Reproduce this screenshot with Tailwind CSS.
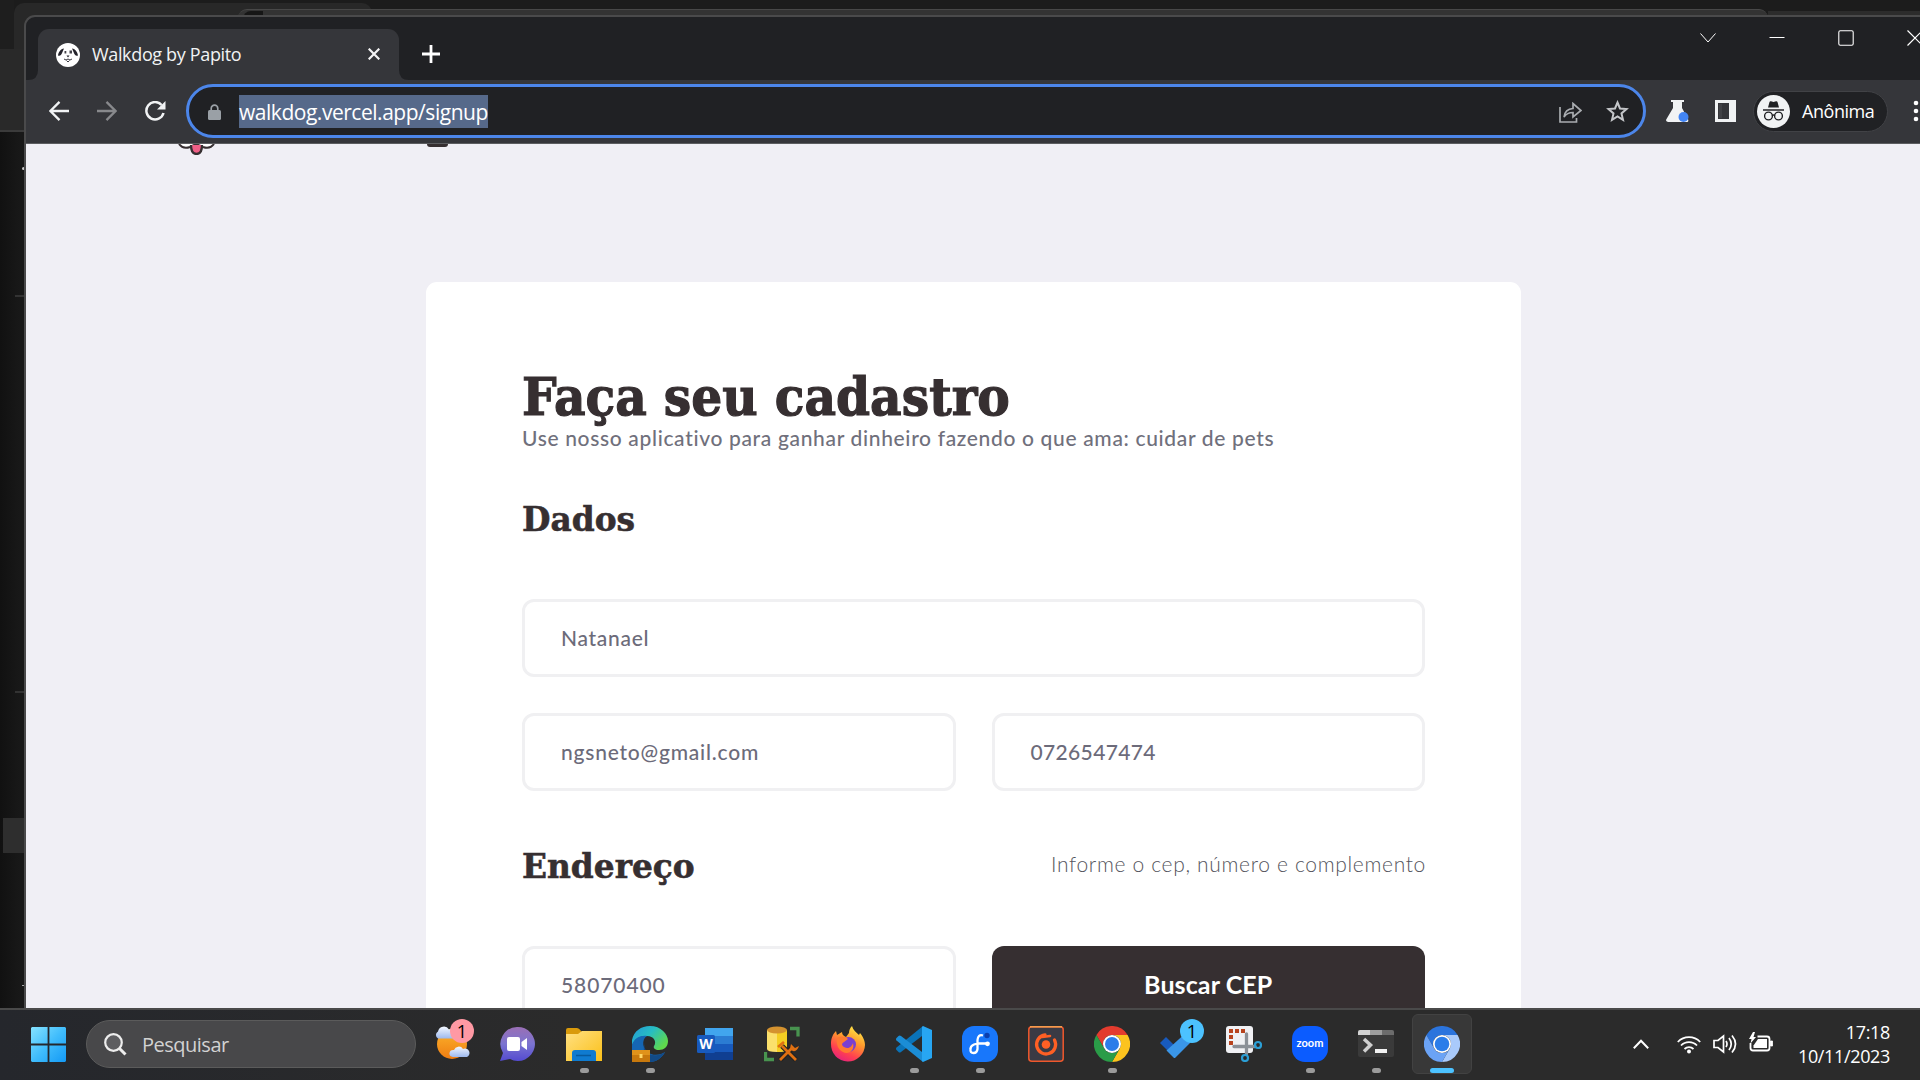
<!DOCTYPE html>
<html lang="pt-BR">
<head>
<meta charset="utf-8">
<title>Walkdog by Papito</title>
<script src="https://cdn.jsdelivr.net/npm/@tailwindcss/browser@4"></script>
</head>
<body class="relative flex h-[1080px] w-[1920px] flex-col overflow-hidden bg-[#181818] font-['Open_Sans',sans-serif]">

<!-- Window behind the browser -->
<div class="absolute inset-0 bg-gradient-to-r from-[#111] from-0% via-[#181818] via-[1%] to-[#181818]">
  <div class="h-[130px] bg-[#1c1c1c]">
    <div class="flex h-[49px]">
      <div class="w-[14px] bg-[#1e1e1e]"></div>
      <div class="mt-[3px] h-[46px] w-[358px] rounded-t-[10px] bg-[#282828]"></div>
    </div>
    <div class="h-[81px] bg-[#292929]"></div>
  </div>
  <div class="h-[2px] bg-[#3b3b3b]"></div>
  <div class="absolute top-[9px] left-[238px] h-5 w-[1530px] rounded-t-[9px] border-t border-[#484848] bg-[#333]"></div>
  <div class="absolute top-[11px] left-[243px] h-2 w-[20px] rounded-tl-lg bg-[#161616]"></div>
  <div class="absolute top-[11px] left-[1768px] h-2 w-[152px] bg-[#2c2c2c]"></div>
  <div class="absolute top-[167px] left-[22px] h-[3px] w-[3px] rounded-full bg-[#ccc]"></div>
  <div class="absolute top-[295px] left-[15px] h-[2px] w-[10px] bg-[#333]"></div>
  <div class="absolute top-[691px] left-[15px] h-[2px] w-[10px] bg-[#333]"></div>
  <div class="absolute top-[818px] left-[3px] h-[35px] w-[22px] bg-[#2e2e2e]"></div>
  <div class="absolute top-[985px] left-[22px] h-px w-[3px] bg-[#aaa]"></div>
</div>

<!-- Browser window -->
<main class="relative mt-[15px] ml-[24px] flex h-[993px] w-[1896px] flex-col overflow-hidden rounded-tl-[11px] border-t-2 border-l-2 border-[#4a4a4b] bg-[#202124]">
  <header class="flex h-[63px] shrink-0">
    <div class="relative mt-3 ml-3 flex h-[51px] w-[361px] items-center rounded-t-[11px] bg-[#35363a] pl-[18px]">
      <svg class="size-6" viewBox="0 0 24 24"><circle cx="12" cy="12" r="12" fill="#fff"/><path d="M8 5.500C4.500 6 2.500 9 2 12.500c2 1 3.500-.5 4.500-3.500zM16 5.500c3.500.5 5.500 3.500 6 7-2 1-3.500-.5-4.500-3.500z" fill="#25242c"/><path d="M8.500 8h1.800v2.500H8.500zM13.500 7.500H16v3h-2.500z" fill="#44434a"/><path d="M10.500 12.500h3L12 14.500z" fill="#25242c"/><path d="M8 16q2 2 4 0 2 2 4 0M10.500 17.500l1.500 1.500 1.500-1.500" fill="none" stroke="#25242c" stroke-width=".9"/></svg>
      <span class="mb-0.5 ml-3 w-[270px] text-[18px] leading-6 tracking-[-0.35px] whitespace-nowrap text-[#f1f3f4]">Walkdog by Papito</span>
      <svg class="absolute left-[330px] top-[19px] size-3" viewBox="0 0 12 12" stroke="#f4f4f5" stroke-width="2.2"><path d="M.7.7l10.6 10.6M11.3.7L.7 11.3"/></svg>
      <svg class="absolute bottom-0 -left-[10px] size-[10px]" viewBox="0 0 10 10"><path d="M10 0v10H0Q10 10 10 0" fill="#35363a"/></svg>
      <svg class="absolute bottom-0 -right-[10px] size-[10px]" viewBox="0 0 10 10"><path d="M0 0v10h10Q0 10 0 0" fill="#35363a"/></svg>
    </div>
    <svg class="mt-[28px] ml-[23px] size-[18px]" viewBox="0 0 18 18" stroke="#fff" stroke-width="2.8"><path d="M9 0v18M0 9h18"/></svg>
    <div class="ml-auto flex h-[42px] items-center text-white">
      <svg class="mr-[53px] h-[10px] w-4" viewBox="0 0 16 10" fill="none" stroke="currentColor" stroke-width="1"><path d="M.5.5L8 9 15.500.5"/></svg>
      <svg class="mr-[53px] h-[16px] w-4" viewBox="0 0 16 16" stroke="currentColor" stroke-width="1"><path d="M.5 7.500h15"/></svg>
      <svg class="mr-[53px] size-4" viewBox="0 0 16 16" fill="none" stroke="currentColor" stroke-width="1.1"><rect x=".8" y=".8" width="14.400" height="14.400" rx="1.500"/></svg>
      <svg class="-mr-[3px] size-4" viewBox="0 0 16 16" stroke="currentColor" stroke-width="1.2"><path d="M.5.5l15 15M15.500.5l-15 15"/></svg>
    </div>
  </header>

  <nav class="relative flex h-[64px] shrink-0 items-center border-b border-[#5c5d60] bg-[#35363a] pb-px pl-[23px]">
    <svg class="h-5 w-5" viewBox="0 0 20 20" fill="none" stroke="#f1f3f4" stroke-width="2.300"><path d="M20 10H1.500M10.500.9L1.400 10l9.100 9.100"/></svg>
    <svg class="ml-7 h-5 w-5" viewBox="0 0 20 20" fill="none" stroke="#88898c" stroke-width="2.300"><path d="M0 10h18.500M9.500.9l9.100 9.100-9.100 9.100"/></svg>
    <svg class="ml-7 h-5 w-[21px]" viewBox="0 0 21 20" fill="none" stroke="#f1f3f4" stroke-width="2.500"><path d="M16.600 4A8.700 8.700 0 1 0 18.500 12"/><path d="M20.500 0v8.500H12z" fill="#f1f3f4" stroke="none"/></svg>
    <div class="ml-5 flex h-[54px] w-[1460px] items-center rounded-full border-3 border-[#4c86ea] bg-[#202124] pl-[19px]">
      <svg class="mt-0.5 h-4 w-[13px]" viewBox="0 0 13 16"><rect y="6" width="13" height="10" rx="1.500" fill="#9aa0a6"/><path d="M3.200 7V4.500a3.300 3.300 0 0 1 6.600 0V7" fill="none" stroke="#9aa0a6" stroke-width="1.700"/></svg>
      <span class="ml-[18px] h-[33px] w-[249px] bg-[#56698a] text-[21px] leading-[34px] tracking-[-0.47px] whitespace-nowrap text-white">walkdog.vercel.app/signup</span>
      <svg class="mt-0.5 ml-auto h-[21px] w-[23px]" viewBox="0 0 23 21" fill="none" stroke="#a9acb0" stroke-width="1.700"><path d="M1 5v15h16.500v-4"/><path d="M5 15Q6 7 14 6.500V1.500l8 7-8 6.500v-4.500Q8 10.500 5 15z"/></svg>
      <svg class="mr-[14px] ml-6 h-[22px] w-[23px]" viewBox="0 0 23 22" fill="none" stroke="#c4c6c9" stroke-width="2"><path d="M11.500 2.500l2.500 6 6.500.6-5 4.300 1.500 6.400-5.500-3.400L6 19.800l1.500-6.400-5-4.300L9 8.500z"/></svg>
    </div>
    <svg class="ml-[20px] h-[22px] w-[24px]" viewBox="0 0 24 22"><path d="M5 0h13v2h-2v6l6 11q1 3-1 3H2q-3-1-1.500-3L7 8V2H5z" fill="#f1f3f4"/><circle cx="17.500" cy="17" r="5" fill="#4285f4"/></svg>
    <svg class="ml-[25px] h-[22px] w-[21px]" viewBox="0 0 21 22"><path d="M0 0h21v22H0z" fill="#f1f3f4"/><path d="M3 3h11v16H3z" fill="#35363a"/><path d="M4 4h3v14H4z" fill="#55565a" opacity=".4"/></svg>
    <div class="ml-[17px] flex h-[41px] w-[135px] items-center rounded-full border border-[#414246] bg-[#202124] pl-[3px]">
      <svg class="size-[33px]" viewBox="0 0 33 33"><circle cx="16.500" cy="16.500" r="16.500" fill="#f1f3f4"/><path d="M11 12.500l1.500-5.500q.4-1 1.500-.7l2.500.6 2.500-.6q1.100-.3 1.500.7l1.500 5.500z" fill="#202124"/><path d="M6 15h21" stroke="#202124" stroke-width="1.500"/><g fill="none" stroke="#202124" stroke-width="1.400"><circle cx="11.500" cy="21" r="3.900"/><circle cx="21.500" cy="21" r="3.900"/><path d="M15 20.500q1.500-1 3 0"/></g></svg>
      <span class="mb-px ml-3 text-[18px] leading-6 tracking-[-0.45px] text-white">Anônima</span>
    </div>
    <svg class="ml-[26px] h-5 w-1 shrink-0 overflow-visible" viewBox="0 0 4 20" fill="#fff"><circle cx="2" cy="2" r="2.300"/><circle cx="2" cy="10" r="2.300"/><circle cx="2" cy="18" r="2.300"/></svg>
  </nav>

  <section class="relative flex min-h-0 grow flex-col bg-[#f0eff5] font-['Lato',sans-serif]">
    <div class="flex h-[138px] shrink-0 items-start pl-[152px]">
      <svg class="h-[11px] w-[37px]" viewBox="0 0 37 11"><path d="M1 0q4 5.500 11 3l6-3 7 3q7 2.500 11-3" fill="#fff" stroke="#362f31" stroke-width="2"/><path d="M13 1q0 9 5.500 9T24 1" fill="#ef5f86" stroke="#362f31" stroke-width="2.300"/></svg>
      <div class="ml-[212px] h-[3px] w-[21px] rounded-b-md bg-[#362f31]"></div>
    </div>
    <div class="ml-[400px] w-[1095px] shrink-0 rounded-t-[11px] bg-white px-24 pt-[82px]">
      <h1 class="h-[60px] origin-left scale-x-[0.92] font-['DejaVu_Serif',serif] text-[53px] leading-[64px] font-bold whitespace-nowrap text-[#362f31] [-webkit-text-stroke:1.2px_#362f31]">Faça seu cadastro</h1>
      <p class="h-[61px] text-[21px] leading-[28px] font-medium tracking-[0.66px] whitespace-nowrap text-[#70707c]">Use nosso aplicativo para ganhar dinheiro fazendo o que ama: cuidar de pets</p>
      <h2 class="mt-[12px] h-[44px] origin-left scale-x-[0.965] font-['DejaVu_Serif',serif] text-[34px] leading-[44px] font-bold whitespace-nowrap text-[#362f31] [-webkit-text-stroke:0.6px_#362f31]">Dados</h2>
      <div class="mt-[58px] flex h-[78px] items-center rounded-xl border-3 border-[#f0f0f2] px-9 text-[21px] font-medium tracking-[0.7px] text-[#6c6b7a]">Natanael</div>
      <div class="mt-9 grid grid-cols-2 gap-9 text-[21px] font-medium text-[#6c6b7a]">
        <div class="flex h-[78px] items-center rounded-xl border-3 border-[#f0f0f2] px-9 tracking-[0.78px]">ngsneto@gmail.com</div>
        <div class="flex h-[78px] items-center rounded-xl border-3 border-[#f0f0f2] px-9 tracking-[0.35px]">0726547474</div>
      </div>
      <div class="mt-[52px] flex h-[46px] items-center justify-between">
        <h2 class="w-[200px] origin-left scale-x-[0.965] font-['DejaVu_Serif',serif] text-[34px] leading-[44px] font-bold whitespace-nowrap text-[#362f31] [-webkit-text-stroke:0.6px_#362f31]">Endereço</h2>
        <span class="-mr-px mb-1 text-[21px] font-light tracking-[0.67px] whitespace-nowrap text-[#55555d]">Informe o cep, número e complemento</span>
      </div>
      <div class="mt-[57px] grid grid-cols-2 gap-9">
        <div class="flex h-[78px] items-center rounded-xl border-3 border-[#f0f0f2] px-9 text-[21px] font-medium tracking-[0.9px] text-[#6c6b7a]">58070400</div>
        <button class="h-[78px] rounded-xl bg-[#362f31] text-[25px] font-bold tracking-[0.1px] text-white">Buscar CEP</button>
      </div>
    </div>
  </section>
</main>

<!-- Taskbar -->
<footer class="relative flex h-[72px] shrink-0 border-t-2 border-[#4a4a4a] bg-gradient-to-r from-[#25272c] to-[#2b2b2b] to-30%">
  <svg class="mt-[17px] ml-[31px] size-[35px] shrink-0" viewBox="0 0 35 35"><defs><linearGradient id="win" x2="1" y2="1"><stop stop-color="#86e3ff"/><stop offset=".5" stop-color="#41bdfc"/><stop offset="1" stop-color="#1399f5"/></linearGradient></defs><path d="M1 0h15.600v16.600H0V1zM18.400 0H34l1 1v15.600H18.400zM0 18.400h16.600V35H1l-1-1zM18.400 18.400H35V34l-1 1H18.400z" fill="url(#win)"/></svg>
  <div class="mt-[10px] ml-5 flex h-[48px] w-[330px] shrink-0 items-center rounded-full border border-[#5b5b5b] bg-[#48484a] pl-[17px]">
    <svg class="size-[23px]" viewBox="0 0 23 23" fill="none" stroke="#ededed"><circle cx="9.500" cy="9.500" r="8.300" stroke-width="2.200" fill="#5d5d60"/><path d="M15.500 15.500l6 6" stroke-width="3"/></svg>
    <span class="mt-0.5 ml-[15px] text-[20px] tracking-[-0.5px] text-[#d2d2d2]">Pesquisar</span>
  </div>

  <div class="ml-[3px] grid shrink-0 grid-cols-[repeat(16,66px)]">
    <div class="relative flex h-[68px] items-center justify-center">
      <svg class="size-9" viewBox="0 0 36 36"><defs><linearGradient id="sun" x2="0" y2="1"><stop stop-color="#fcb52c"/><stop offset="1" stop-color="#ef7d12"/></linearGradient><linearGradient id="cl" x2="0" y2="1"><stop stop-color="#f2f7ff"/><stop offset="1" stop-color="#9db9ee"/></linearGradient></defs><circle cx="18" cy="18" r="15" fill="url(#sun)"/><path d="M4 12.500a4 4 0 0 1 0-7 6 6 0 0 1 11-2 5 5 0 0 1 5 9z" fill="url(#cl)"/><path d="M19 31a4 3.500 0 0 1 1-7 5 5 0 0 1 9-1 4 4 0 0 1 4 8z" fill="url(#cl)"/></svg>
      <span class="absolute top-[9px] left-[31px] size-6 rounded-full bg-[#ff99a4] text-center text-[18px] leading-6 text-black">1</span>
    </div>
    <div class="flex h-[68px] items-center justify-center">
      <svg class="-ml-0.5 size-9" viewBox="0 0 36 36"><defs><linearGradient id="chat" x2="0" y2="1"><stop stop-color="#9a6fb5"/><stop offset=".5" stop-color="#7b74d0"/><stop offset="1" stop-color="#544bd0"/></linearGradient></defs><path d="M18 1a17 17 0 1 1-7 32L1 35l3-8A17 17 0 0 1 18 1z" fill="url(#chat)"/><rect x="8" y="11" width="13" height="14" rx="2" fill="#fff"/><path d="M22.500 16l5.500-4v12l-5.500-4z" fill="#fff"/></svg>
    </div>
    <div class="relative flex h-[68px] items-center justify-center">
      <svg class="size-9" viewBox="0 0 36 36"><defs><linearGradient id="fo" x2="1" y2="1"><stop stop-color="#ffe083"/><stop offset="1" stop-color="#fbc018"/></linearGradient></defs><path d="M0 12V4q0-2 2-2h9q2 0 4 3l2 2-3 5z" fill="#d99a0b"/><path d="M0 8h12l4-3h20v30H0z" fill="url(#fo)"/><path d="M6 35V27q0-3 3-3h18q3 0 3 3v8z" fill="#0f7bd0"/><path d="M10 29.500h15" stroke="#075a9e" stroke-width="1.500"/></svg>
      <span class="absolute bottom-[5px] left-[28.500px] h-[5px] w-[9px] rounded-full bg-[#9b9b9b]"></span>
    </div>
    <div class="relative flex h-[68px] items-center justify-center">
      <svg class="size-9" viewBox="0 0 36 36"><defs><linearGradient id="ed" x2="1" y2=".6"><stop stop-color="#2398d8"/><stop offset=".5" stop-color="#27bdc3"/><stop offset="1" stop-color="#5fd94c"/></linearGradient></defs><path d="M0 14C2 5 9 0 18 0c11 0 18 8 18 15 0 6-4 9-9 9-4 0-6-2-5-4 3-4 0-10-7-10C8 10 2 13 0 20z" fill="url(#ed)"/><path d="M0 19C2 12 9 9 15 10c-6 3-5 15 4 18 6 2 11 0 14-2-3 6-9 10-15 10H0z" fill="#1566b4"/><path d="M13 16c-3 8 4 15 13 13 4-1 6-2 7-3-3 6-9 10-15 10-5-4-8-13-5-20z" fill="#124a87"/><rect y="24" width="18" height="12" fill="#c8790d"/><path d="M0 24h18v5H0z" fill="#e0931b"/><path d="M7.500 28h3v4h-3z" fill="#ffd766"/></svg>
      <span class="absolute bottom-[5px] left-[28.500px] h-[5px] w-[9px] rounded-full bg-[#9b9b9b]"></span>
    </div>
    <div class="flex h-[68px] items-center justify-center">
      <div class="relative -ml-0.5 size-9">
        <svg class="size-9" viewBox="0 0 36 36"><path d="M8 2h28v8H8z" fill="#41a5ee"/><path d="M8 10h28v8H8z" fill="#2b7cd3"/><path d="M8 18h28v8H8z" fill="#185abd"/><path d="M8 26h28v8H8z" fill="#103f91"/><rect y="9" width="18" height="18" rx="1.500" fill="#185abd"/></svg>
        <span class="absolute top-[9px] left-0 w-[18px] text-center text-[14px] leading-[18px] font-bold text-white">W</span>
      </div>
    </div>
    <div class="flex h-[68px] items-center justify-center">
      <svg class="size-9" viewBox="0 0 36 36"><path d="M3 4v19q0 3 10 3t10-3V4z" fill="#fbe06c"/><path d="M13 4h10v19q0 3-10 3z" fill="#f5ce22"/><ellipse cx="13" cy="4" rx="10" ry="3.500" fill="#d4922f"/><path d="M26 2.500h8v8M1.500 26v7.500H10" fill="none" stroke="#48934f" stroke-width="3.300"/><path d="M16 34l14-14M32 34L18 20" stroke="#222" stroke-width="5"/><path d="M16 34l13-13M32 34L18 20M14 21l6-5" stroke="#e07012" stroke-width="2.800"/><path d="M27 18q-2 6 2 7t6-5l-4 2-2-2z" fill="#e07012"/></svg>
    </div>
    <div class="flex h-[68px] items-center justify-center">
      <svg class="size-9" viewBox="0 0 36 36"><defs><linearGradient id="ff" x1=".8" x2=".3" y2="1"><stop stop-color="#fff04a"/><stop offset=".4" stop-color="#ff9a2c"/><stop offset=".75" stop-color="#ff4050"/><stop offset="1" stop-color="#e5227e"/></linearGradient></defs><path d="M22 0c1 4 4 6 7 9l1-2c4 5 5 9 5 12A17 17 0 0 1 1 18C1 12 3 8 6 5l1 4 5-3c0 3 2 4 4 5l3-4c0-3 1-5 3-7z" fill="url(#ff)"/><circle cx="18.500" cy="18.500" r="7.500" fill="#7a3fd0"/><path d="M7 12c4-2 8-2 11 1l-4 3c-2 1-3 3 0 5 5 3 8-1 9-4 2 8-5 12-10 9-5-2-7-8-6-14z" fill="#ff7a30"/></svg>
    </div>
    <div class="relative flex h-[68px] items-center justify-center">
      <svg class="size-9" viewBox="0 0 36 36"><path d="M27 0l-1 10L5 26q-1.500 1-2.500 0L.5 24q-1-1.500 0-2.500z" fill="#0a73b8"/><path d="M.5 14.500q-1-1.500 0-2.500l2-2q1-1 2.500 0l21 16 1 10z" fill="#1b8dd6"/><path d="M27 0l9 4v28l-9 4-1-1V1z" fill="#27a6f2"/></svg>
      <span class="absolute bottom-[5px] left-[28.500px] h-[5px] w-[9px] rounded-full bg-[#9b9b9b]"></span>
    </div>
    <div class="relative flex h-[68px] items-center justify-center">
      <svg class="size-9" viewBox="0 0 36 36"><rect width="36" height="36" rx="12" fill="#1877fb"/><path d="M21 9.500Q16 8 15.500 14v9q-.5 4-4 4T8.500 23q0-3 3.500-4.500l4-1h10" fill="none" stroke="#fff" stroke-width="2.300"/><circle cx="25" cy="9.500" r="2.700" fill="#0b3fae"/><circle cx="25.500" cy="17.800" r="2.400" fill="#fff"/></svg>
      <span class="absolute bottom-[5px] left-[28.500px] h-[5px] w-[9px] rounded-full bg-[#9b9b9b]"></span>
    </div>
    <div class="flex h-[68px] items-center justify-center">
      <svg class="size-9" viewBox="0 0 36 36"><rect x=".8" y=".8" width="34.400" height="34.400" rx="3" fill="#3a3a44" stroke="#f0582c" stroke-width="1.500"/><path d="M2 .8h32" stroke="#f5a050" stroke-width="1.500"/><circle cx="18" cy="18.500" r="4.300" fill="#ff5f24"/><path d="M17 9a9.500 9.500 0 1 0 9.500 5" fill="none" stroke="#ff5f24" stroke-width="3.300" stroke-linecap="round"/><path d="M14 11l8-1" stroke="#ff5f24" stroke-width="2.600" stroke-linecap="round"/></svg>
    </div>
    <div class="relative flex h-[68px] items-center justify-center">
      <svg class="size-9" viewBox="0 0 36 36"><path d="M2.400 9A18 18 0 0 1 33.600 9H18a9 9 0 0 0-7.800 13.500z" fill="#e33b2e"/><path d="M33.600 9A18 18 0 0 1 18 36l7.800-13.500A9 9 0 0 0 18 9z" fill="#fcc31e"/><path d="M18 36A18 18 0 0 1 2.400 9l7.800 13.500A9 9 0 0 0 25.800 22.500z" fill="#2a9c48"/><circle cx="18" cy="18" r="9" fill="#fff"/><circle cx="18" cy="18" r="7" fill="#2b7de9"/></svg>
      <span class="absolute bottom-[5px] left-[28.500px] h-[5px] w-[9px] rounded-full bg-[#9b9b9b]"></span>
    </div>
    <div class="relative flex h-[68px] items-center justify-center">
      <svg class="size-9" viewBox="0 0 36 36"><path d="M0 17l6-6 8 8-6 6z" fill="#185abd"/><path d="M6.500 24.500l7 7q1 1 2 0L36 11l-7-7z" fill="#3a96e8"/></svg>
      <span class="absolute top-[9px] left-[35px] size-6 rounded-full bg-[#4cc2ff] text-center text-[18px] leading-6 text-black">1</span>
    </div>
    <div class="flex h-[68px] items-center justify-center">
      <svg class="size-9" viewBox="0 0 36 36"><rect width="27" height="27" rx="3" fill="#f0f1f4"/><path d="M3 3h4v4H3zM9 3h4v4H9zM15 3h4v4h-4zM3 9h4v4H3zM3 15h4v4H3z" fill="#b8441f"/><path d="M20.500 8v20M8 20.500h21" stroke="#8b9097" stroke-width="3.300" stroke-linecap="round"/><circle cx="32" cy="19" r="3" fill="none" stroke="#2b9fd6" stroke-width="2.200"/><circle cx="19" cy="32" r="3" fill="none" stroke="#2b9fd6" stroke-width="2.200"/></svg>
    </div>
    <div class="relative flex h-[68px] items-center justify-center">
      <div class="flex size-9 items-center justify-center rounded-[13px] bg-[#0b5cff] pb-0.5 font-['Lato',sans-serif] text-[11px] font-bold text-white">zoom</div>
      <span class="absolute bottom-[5px] left-[28.500px] h-[5px] w-[9px] rounded-full bg-[#9b9b9b]"></span>
    </div>
    <div class="relative flex h-[68px] items-center justify-center">
      <svg class="size-9" viewBox="0 0 36 36"><rect y="4" width="36" height="27" rx="2" fill="#3a3a3a"/><path d="M0 9V6q0-2 2-2h10v5z" fill="#d4d4d4"/><path d="M12 4h12v5H12z" fill="#9e9e9e"/><path d="M24 4h10q2 0 2 2v3H24z" fill="#6c6c6c"/><path d="M6 13l6.500 6L6 25.500" fill="none" stroke="#cfcfcf" stroke-width="3.500"/><path d="M17 23h12v4H17z" fill="#f2f2f2"/></svg>
      <span class="absolute bottom-[5px] left-[28.500px] h-[5px] w-[9px] rounded-full bg-[#9b9b9b]"></span>
    </div>
    <div class="relative flex h-[68px] items-center justify-center">
      <div class="flex size-[60px] items-center justify-center rounded-md border border-[#424242] bg-[#383838]">
        <svg class="size-9" viewBox="0 0 36 36"><path d="M2.400 9A18 18 0 0 1 33.600 9H18a9 9 0 0 0-7.800 13.500z" fill="#2b74dd"/><path d="M33.600 9A18 18 0 0 1 18 36l7.800-13.500A9 9 0 0 0 18 9z" fill="#a9cafb"/><path d="M18 36A18 18 0 0 1 2.400 9l7.800 13.500A9 9 0 0 0 25.800 22.500z" fill="#6ba3f5"/><circle cx="18" cy="18" r="9" fill="#fff"/><circle cx="18" cy="18" r="7.300" fill="#2b7de9"/></svg>
      </div>
      <span class="absolute bottom-[5px] left-[21px] h-[5px] w-6 rounded-full bg-[#4cc2ff]"></span>
    </div>
  </div>

  <div class="ml-auto flex h-[68px] items-center pr-[30px] text-white">
    <svg class="mr-[28px] h-[10px] w-4" viewBox="0 0 16 10" fill="none" stroke="currentColor" stroke-width="2"><path d="M.8 9.200L8 1.700l7.200 7.500"/></svg>
    <svg class="mr-3 h-[19px] w-6" viewBox="0 0 24 19" fill="none" stroke="currentColor" stroke-width="1.800"><path d="M.8 7a15.500 15.500 0 0 1 22.400 0M4 10.500a11 11 0 0 1 16 0M7.500 14a6.500 6.500 0 0 1 9 0"/><circle cx="12" cy="16.500" r="2" fill="currentColor" stroke="none"/></svg>
    <svg class="mr-3 h-5 w-6" viewBox="0 0 24 20" fill="none" stroke="currentColor" stroke-width="1.700"><path d="M1 6.500h4L10.500 2v16L5 13.500H1z"/><path d="M13 7q2 3 0 6M16 4q4.500 6 0 12M19 1.500q7 8.500 0 17"/></svg>
    <svg class="mr-[25px] mb-1 h-5 w-6" viewBox="0 0 24 20" fill="none" stroke="currentColor" stroke-width="1.800"><path d="M8.500 4.500H18q2.500 0 2.500 2.500v9q0 2.500-2.500 2.500H4Q1.500 18.500 1.500 16v-5"/><path d="M9 7h9v9H4.500v-2.500z" fill="currentColor" stroke="none"/><path d="M21.500 9h2v5h-2z" fill="currentColor" stroke-width=".8"/><path d="M4 0L0 7h2.500L1.500 11.500 7 5H4.500L6 0z" fill="currentColor" stroke="none"/></svg>
    <div class="flex w-[92px] flex-col items-end text-[18px] leading-6 tracking-[-0.35px] whitespace-nowrap"><div>17:18</div><div>10/11/2023</div></div>
  </div>
</footer>
</body>
</html>
